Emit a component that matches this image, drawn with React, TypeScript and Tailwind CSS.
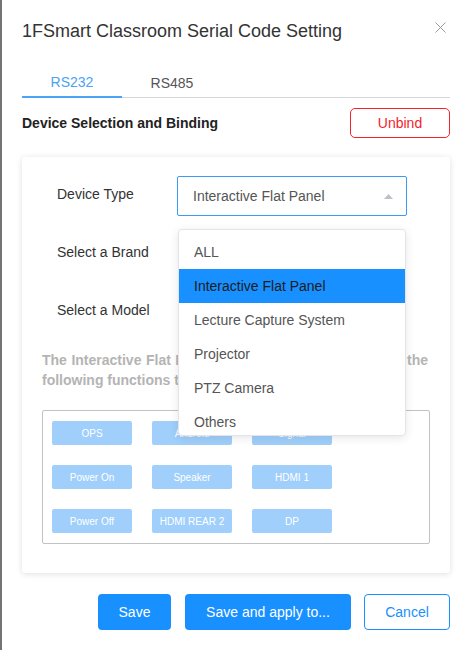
import React from "react";

const deviceTypes = [
  "ALL",
  "Interactive Flat Panel",
  "Lecture Capture System",
  "Projector",
  "PTZ Camera",
  "Others",
];

const functions = [
  "OPS",
  "Android",
  "Signal",
  "Power On",
  "Speaker",
  "HDMI 1",
  "Power Off",
  "HDMI REAR 2",
  "DP",
];

const App: React.FC = () => {
  return (
    <div className="flex w-[470px] h-[650px] bg-white font-['Liberation_Sans',Arial,sans-serif] overflow-hidden">
      {/* page behind the dialog */}
      <div className="w-[2px] shrink-0 bg-[#747474]" />

      <div className="flex-1 px-[20px]">
        {/* Header */}
        <div className="flex justify-between items-start pt-[20px]">
          <h2 className="text-[18px] leading-[22px] text-[#333]">
            1FSmart Classroom Serial Code Setting
          </h2>
          <svg
            className="mt-[2px] mr-[4px]"
            width="11"
            height="11"
            viewBox="0 0 11 11"
          >
            <path d="M0.5 0.5 L10.5 10.5 M10.5 0.5 L0.5 10.5" stroke="#9a9a9a" strokeWidth="1" />
          </svg>
        </div>

        {/* Tabs */}
        <div className="mt-[24px] h-[32px] flex border-b border-[#d6d6d6]">
          <div className="w-[100px] h-[32px] -mb-px flex items-center justify-center pt-[3px] border-b-2 border-[#4aa3f5] text-[14px] text-[#4aa3f5]">
            RS232
          </div>
          <div className="w-[100px] h-[32px] flex items-center justify-center pt-[3px] text-[14px] text-[#555]">
            RS485
          </div>
        </div>

        {/* Section title */}
        <div className="mt-[10px] flex items-center justify-between">
          <span className="text-[14px] font-bold text-[#222]">Device Selection and Binding</span>
          <button className="w-[100px] h-[30px] rounded-[5px] border border-[#f5222d] text-[14px] text-[#f5222d] bg-white">
            Unbind
          </button>
        </div>

        {/* Card */}
        <div className="mt-[19px] rounded-[3px] bg-white shadow-[0_1px_6px_rgba(0,0,0,0.13)] pt-[19px] px-[20px] pb-[29px]">
          <div className="pl-[15px] flex flex-col gap-[18px]">
            <div className="flex h-[40px] items-center">
              <span className="w-[120px] pb-[4px] text-[14px] text-[#333]">Device Type</span>
              <div className="relative">
                <div className="w-[230px] h-[40px] rounded-[2px] border border-[#3a9af5] pl-[15px] pr-[13px] flex items-center justify-between text-[14px] text-[#555]">
                  <span>Interactive Flat Panel</span>
                  <svg width="9" height="5" viewBox="0 0 9 5">
                    <polygon points="4.5,0 9,5 0,5" fill="#bcc0c7" />
                  </svg>
                </div>

                {/* open dropdown */}
                <div className="absolute z-10 top-[53px] left-[1px] w-[228px] h-[207px] overflow-hidden rounded-[4px] border border-[#e2e4ea] bg-white pt-[5px] shadow-[0_2px_10px_rgba(0,0,0,0.1)]">
                  {deviceTypes.map((t) => (
                    <div
                      key={t}
                      className={
                        t === "Interactive Flat Panel"
                          ? "h-[34px] pl-[15px] flex items-center text-[14px] bg-[#1890ff] text-[#1c1c1c]"
                          : "h-[34px] pl-[15px] flex items-center text-[14px] text-[#555]"
                      }
                    >
                      {t}
                    </div>
                  ))}
                </div>
              </div>
            </div>
            <div className="flex h-[40px] items-center">
              <span className="w-[120px] pb-[4px] text-[14px] text-[#333]">Select a Brand</span>
            </div>
            <div className="flex h-[40px] items-center">
              <span className="w-[120px] pb-[4px] text-[14px] text-[#333]">Select a Model</span>
            </div>
          </div>

          <p className="mt-[18px] w-[386px] text-justify text-[14px] leading-[20px] font-bold text-[#b4b4b4]">
            The Interactive Flat Panel of this model also supports the following functions that can be set:
          </p>

          {/* Functions */}
          <div className="mt-[20px] rounded-[2px] border border-[#c2c2c2] pl-[9px] pt-[10px] pb-[10px]">
            <div className="grid grid-cols-[repeat(3,80px)] gap-[20px]">
              {functions.map((f) => (
                <div
                  key={f}
                  className="h-[24px] rounded-[2px] bg-[#a0cffb] flex items-center justify-center text-[10px] text-white"
                >
                  {f}
                </div>
              ))}
            </div>
          </div>
        </div>

        {/* Footer */}
        <div className="mt-[21px] flex justify-end gap-[13px]">
          <button className="w-[73px] h-[36px] mr-[1px] rounded-[4px] bg-[#1890ff] text-[14px] text-white">
            Save
          </button>
          <button className="w-[166px] h-[36px] rounded-[4px] bg-[#1890ff] text-[14px] text-white">
            Save and apply to...
          </button>
          <button className="w-[86px] h-[36px] rounded-[4px] border border-[#1890ff] bg-white text-[14px] text-[#1890ff]">
            Cancel
          </button>
        </div>
      </div>
    </div>
  );
};

export default App;
